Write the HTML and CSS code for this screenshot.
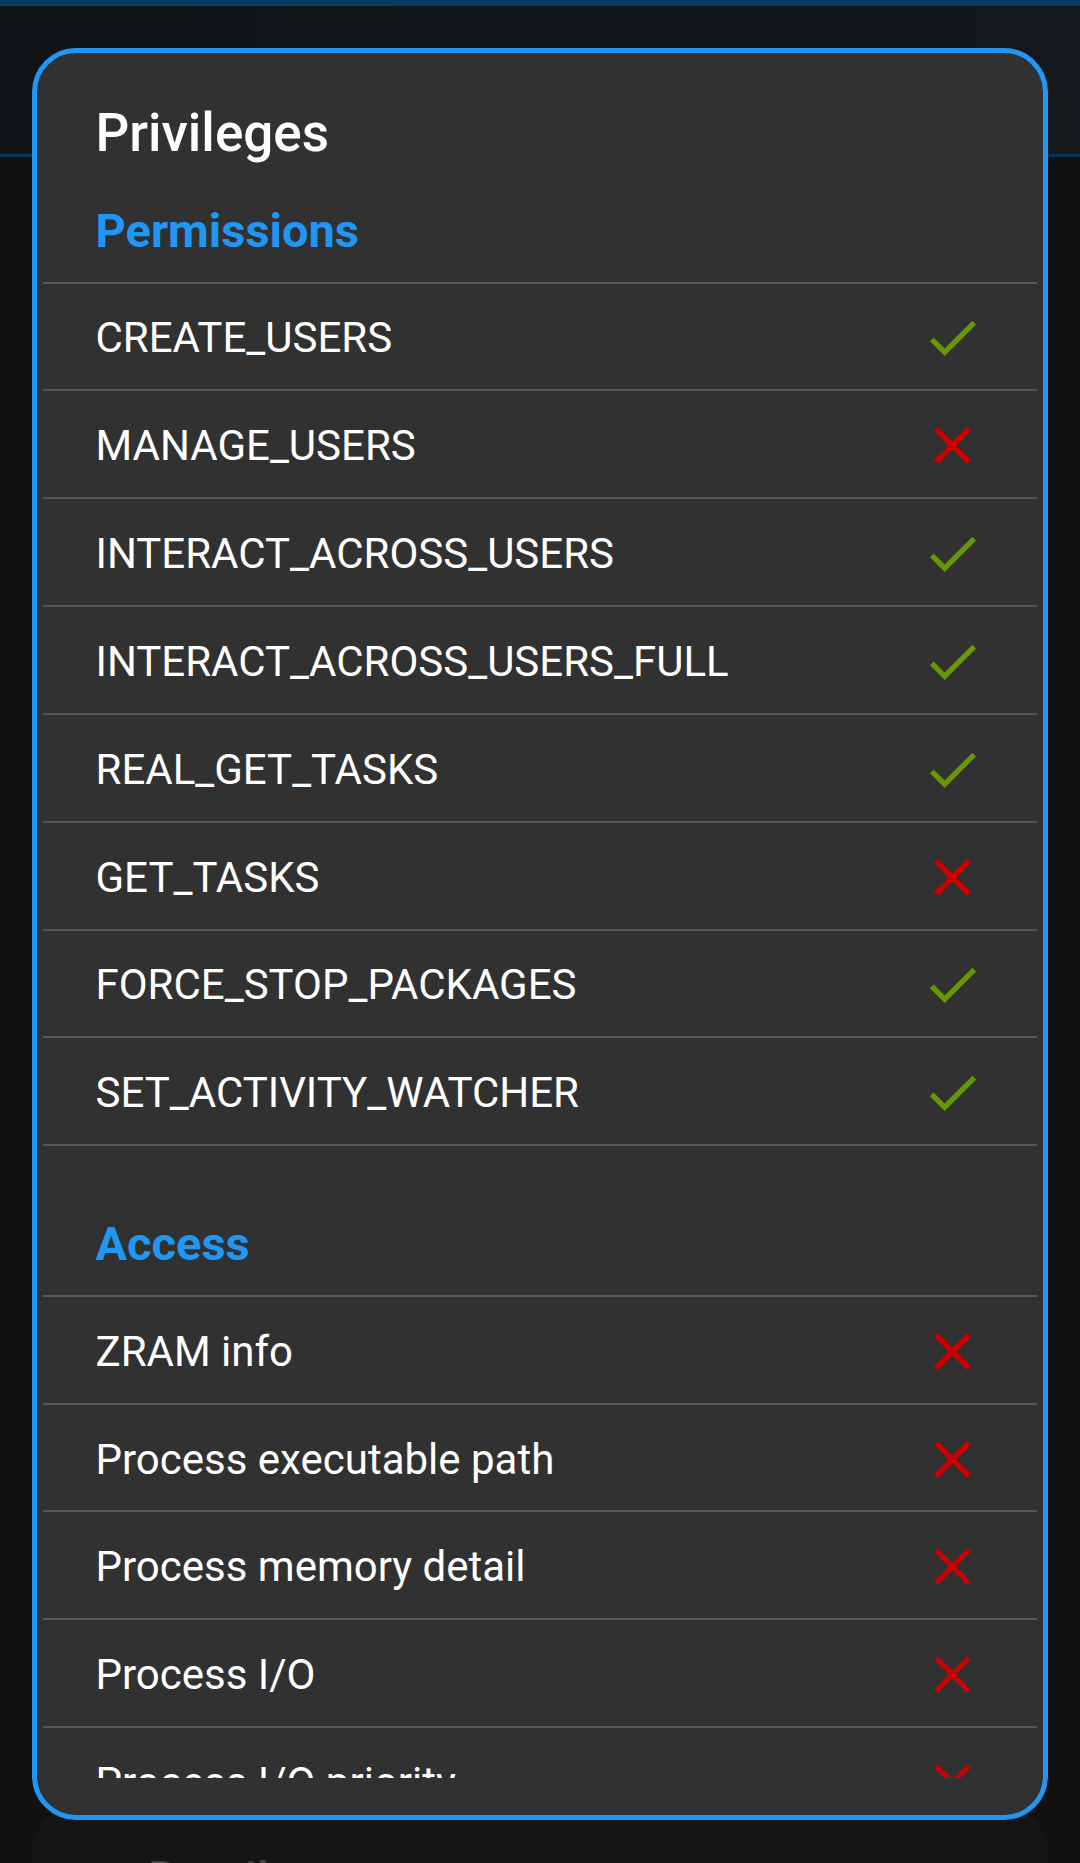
FILE: index.html
```html
<!DOCTYPE html>
<html lang="en">
<head>
<meta charset="utf-8">
<title>Privileges</title>
<link rel="stylesheet" href="styles.css">
</head>
<body>
<div class="statusbar"></div>
<div class="appbar"></div>
<div class="appbar-line"></div>
<div class="content">
  <div class="card-behind"><span class="card-behind-title">Details</span></div>
</div>

<div class="dialog">
  <div class="dialog-title">Privileges</div>
  <div class="dialog-scroll">
    <div class="section-head first">Permissions</div>
    <div class="row"><span class="label">CREATE_USERS</span><svg class="ic ok" viewBox="0 0 24 24"><path d="M9 16.17L4.83 12l-1.42 1.41L9 19 21 7l-1.41-1.41z"/></svg></div>
    <div class="row"><span class="label">MANAGE_USERS</span><svg class="ic no" viewBox="0 0 24 24"><path d="M19 6.41L17.59 5 12 10.59 6.41 5 5 6.41 10.59 12 5 17.59 6.41 19 12 13.41 17.59 19 19 17.59 13.41 12z"/></svg></div>
    <div class="row"><span class="label">INTERACT_ACROSS_USERS</span><svg class="ic ok" viewBox="0 0 24 24"><path d="M9 16.17L4.83 12l-1.42 1.41L9 19 21 7l-1.41-1.41z"/></svg></div>
    <div class="row"><span class="label">INTERACT_ACROSS_USERS_FULL</span><svg class="ic ok" viewBox="0 0 24 24"><path d="M9 16.17L4.83 12l-1.42 1.41L9 19 21 7l-1.41-1.41z"/></svg></div>
    <div class="row"><span class="label">REAL_GET_TASKS</span><svg class="ic ok" viewBox="0 0 24 24"><path d="M9 16.17L4.83 12l-1.42 1.41L9 19 21 7l-1.41-1.41z"/></svg></div>
    <div class="row"><span class="label">GET_TASKS</span><svg class="ic no" viewBox="0 0 24 24"><path d="M19 6.41L17.59 5 12 10.59 6.41 5 5 6.41 10.59 12 5 17.59 6.41 19 12 13.41 17.59 19 19 17.59 13.41 12z"/></svg></div>
    <div class="row"><span class="label">FORCE_STOP_PACKAGES</span><svg class="ic ok" viewBox="0 0 24 24"><path d="M9 16.17L4.83 12l-1.42 1.41L9 19 21 7l-1.41-1.41z"/></svg></div>
    <div class="row"><span class="label">SET_ACTIVITY_WATCHER</span><svg class="ic ok" viewBox="0 0 24 24"><path d="M9 16.17L4.83 12l-1.42 1.41L9 19 21 7l-1.41-1.41z"/></svg></div>

    <div class="section-head second">Access</div>
    <div class="row"><span class="label">ZRAM info</span><svg class="ic no" viewBox="0 0 24 24"><path d="M19 6.41L17.59 5 12 10.59 6.41 5 5 6.41 10.59 12 5 17.59 6.41 19 12 13.41 17.59 19 19 17.59 13.41 12z"/></svg></div>
    <div class="row"><span class="label">Process executable path</span><svg class="ic no" viewBox="0 0 24 24"><path d="M19 6.41L17.59 5 12 10.59 6.41 5 5 6.41 10.59 12 5 17.59 6.41 19 12 13.41 17.59 19 19 17.59 13.41 12z"/></svg></div>
    <div class="row"><span class="label">Process memory detail</span><svg class="ic no" viewBox="0 0 24 24"><path d="M19 6.41L17.59 5 12 10.59 6.41 5 5 6.41 10.59 12 5 17.59 6.41 19 12 13.41 17.59 19 19 17.59 13.41 12z"/></svg></div>
    <div class="row"><span class="label">Process I/O</span><svg class="ic no" viewBox="0 0 24 24"><path d="M19 6.41L17.59 5 12 10.59 6.41 5 5 6.41 10.59 12 5 17.59 6.41 19 12 13.41 17.59 19 19 17.59 13.41 12z"/></svg></div>
    <div class="row"><span class="label">Process I/O priority</span><svg class="ic no" viewBox="0 0 24 24"><path d="M19 6.41L17.59 5 12 10.59 6.41 5 5 6.41 10.59 12 5 17.59 6.41 19 12 13.41 17.59 19 19 17.59 13.41 12z"/></svg></div>
  </div>
</div>
</body>
</html>
```

FILE: styles.css
```css
* { box-sizing: border-box; }

html, body {
  margin: 0;
  padding: 0;
}

body {
  width: 1080px;
  height: 1863px;
  overflow: hidden;
  background: #111111;
  font-family: Roboto, "Noto Sans", "Liberation Sans", sans-serif;
  position: relative;
}

.statusbar {
  height: 6px;
  background: #0c3b60;
}

.appbar {
  height: 148px;
  background: linear-gradient(90deg, #111417 0%, #12161a 60%, #14181c 100%);
}

.appbar-line {
  height: 3px;
  background: #0f3352;
}

.content {
  padding: 1650px 32px 0 32px;
}

.card-behind {
  height: 80px;
  background: #151515;
  border-radius: 44px 44px 0 0;
  padding: 43px 0 0 116px;
}

.card-behind-title {
  display: block;
  font-size: 47px;
  font-weight: 500;
  line-height: normal;
  color: #464646;
}

.dialog {
  position: absolute;
  left: 32px;
  top: 48px;
  width: 1016px;
  height: 1772px;
  border: 5px solid #2196f3;
  border-radius: 44px;
  background: #313131;
  padding-bottom: 37px;
  display: flex;
  flex-direction: column;
  overflow: hidden;
}

.dialog-title {
  padding: 50px 0 0 58.5px;
  font-size: 53px;
  line-height: 61px;
  font-weight: 500;
  color: #ffffff;
  flex-shrink: 0;
}

.dialog-scroll {
  flex: 1;
  min-height: 0;
  overflow: hidden;
  padding: 0 6px;
}

.section-head {
  padding-left: 52.5px;
  font-size: 47px;
  font-weight: 700;
  line-height: 56px;
  color: #2196f3;
  border-bottom: 2px solid #575757;
}

.section-head.first {
  margin-top: 39px;
  padding-bottom: 22.5px;
}

.section-head.second {
  margin-top: 70.2px;
  padding-bottom: 22.3px;
}

.row {
  height: 107.85px;
  display: flex;
  align-items: center;
  justify-content: space-between;
  padding: 3px 53.5px 0 52.5px;
  border-bottom: 2px solid #575757;
}

.label {
  font-size: 42px;
  font-weight: 400;
  color: #ffffff;
  white-space: nowrap;
}

.ic {
  width: 63px;
  height: 63px;
  flex-shrink: 0;
}

.ic.ok { fill: #669900; }
.ic.no { fill: #cc0000; }
```
